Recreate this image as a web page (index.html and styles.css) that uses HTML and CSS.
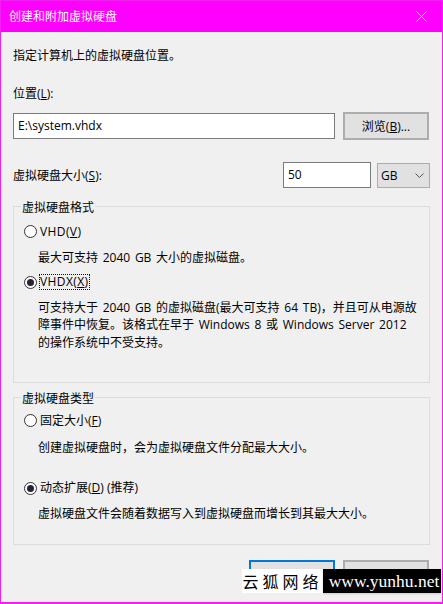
FILE: index.html
```html
<!DOCTYPE html>
<html lang="zh-CN">
<head>
<meta charset="utf-8">
<title>创建和附加虚拟硬盘</title>
<link rel="stylesheet" href="styles.css">
</head>
<body>
<div class="window">
  <header class="titlebar">
    <span class="title">创建和附加虚拟硬盘</span>
    <svg class="close" width="11" height="11" viewBox="0 0 11 11"><path d="M0.5 0.5L10.5 10.5M10.5 0.5L0.5 10.5" stroke="#fff" stroke-width="1" fill="none"/></svg>
  </header>
  <main class="content">
    <p class="intro">指定计算机上的虚拟硬盘位置。</p>
    <p class="loc-label">位置(<u>L</u>):</p>
    <div class="loc-row">
      <div class="field loc-field">E:\system.vhdx</div>
      <div class="btn">浏览(<u>B</u>)...</div>
    </div>
    <div class="size-row">
      <span class="size-label">虚拟硬盘大小(<u>S</u>):</span>
      <div class="field size-field">50</div>
      <div class="combo"><span>GB</span>
        <svg width="9" height="5" viewBox="0 0 9 5"><path d="M0.5 0.5L4.5 4.5L8.5 0.5" stroke="#555" fill="none"/></svg>
      </div>
    </div>
    <section class="group group-format">
      <div class="legend">虚拟硬盘格式</div>
      <div class="radio-row first"><span class="radio"></span><span class="radio-text latin">VHD(<u>V</u>)</span></div>
      <p class="desc">最大可支持 2040 GB 大小的虚拟磁盘。</p>
      <div class="radio-row second"><span class="radio on"></span><span class="radio-text latin focus">VHDX(<u>X</u>)</span></div>
      <p class="desc multi">可支持大于 2040 GB 的虚拟磁盘(最大可支持 64 TB)，并且可从电源故<br>障事件中恢复。该格式在早于 Windows 8 或 Windows Server 2012<br>的操作系统中不受支持。</p>
    </section>
    <section class="group group-type">
      <div class="legend">虚拟硬盘类型</div>
      <div class="radio-row first"><span class="radio"></span><span class="radio-text">固定大小(<u>F</u>)</span></div>
      <p class="desc">创建虚拟硬盘时，会为虚拟硬盘文件分配最大大小。</p>
      <div class="radio-row third"><span class="radio on"></span><span class="radio-text">动态扩展(<u>D</u>) (推荐)</span></div>
      <p class="desc multi">虚拟硬盘文件会随着数据写入到虚拟硬盘而增长到其最大大小。</p>
    </section>
    <div class="actions">
      <div class="btn primary"></div>
      <div class="btn"></div>
    </div>
  </main>
  <div class="watermark"><span class="wm-cn">云狐网络</span><span class="wm-en">www.yunhu.net</span></div>
</div>
</body>
</html>
```
FILE: styles.css
```css
html, body { margin: 0; padding: 0; }
body {
  width: 443px;
  height: 604px;
  overflow: hidden;
  background: #fff;
  font-family: "Open Sans", "Noto Sans CJK SC", sans-serif;
  font-size: 12px;
  line-height: 17px;
  color: #000;
}
p { margin: 0; }
u { text-underline-offset: 1px; }
.window {
  position: relative;
  box-sizing: border-box;
  width: 443px;
  height: 604px;
  border: 1px solid #f020f0;
  border-bottom-width: 2px;
  background: #f0f0f0;
  display: flex;
  flex-direction: column;
}
.titlebar {
  height: 30px;
  flex: none;
  background: #ff00ff;
  color: #fff;
  display: flex;
  align-items: center;
  justify-content: space-between;
  padding: 0 15px 1px 8px;
}
.title { font-size: 12px; }
.content { padding: 0 12px; display: flex; flex-direction: column; }
.intro { margin-top: 15px; }
.loc-label { margin-top: 21px; }
.loc-row { display: flex; align-items: center; gap: 8px; margin-top: 10px; }
.field {
  box-sizing: border-box;
  height: 26px;
  border: 1px solid #7a7a7a;
  background: #fff;
  padding: 3px 3px 3px 4px;
}
.loc-field { width: 322px; }
.btn {
  box-sizing: border-box;
  width: 86px;
  height: 28px;
  border: 2px solid #adadad;
  background: #e1e1e1;
  display: flex;
  align-items: center;
  justify-content: center;
}
.btn.primary { border-color: #0078d7; }
.size-row { display: flex; align-items: center; margin-top: 22px; }
.size-label { flex: 1; }
.size-field { width: 88px; }
.combo {
  box-sizing: border-box;
  width: 53px;
  height: 25px;
  margin-left: 6px;
  border: 1px solid #adadad;
  background: #e1e1e1;
  display: flex;
  align-items: center;
  justify-content: space-between;
  padding: 0 5px 0 3px;
}
.group {
  position: relative;
  box-sizing: border-box;
  width: 417px;
  border: 1px solid #dcdcdc;
}
.group-format { height: 177px; margin-top: 18px; }
.group-type { height: 148px; margin-top: 14px; }
.legend {
  position: absolute;
  left: 7px;
  top: -7px;
  padding: 0 1px;
  line-height: 15px;
  background: #f0f0f0;
}
.radio-row { display: flex; align-items: center; min-height: 19px; margin-left: 10px; }
.radio-row.first { margin-top: 15px; }
.group-type .radio-row.first { margin-top: 13px; }
.radio-row.second { margin-top: 6px; }
.radio-row.third { margin-top: 22px; }
.radio {
  box-sizing: border-box;
  width: 13px;
  height: 13px;
  border: 1px solid #333;
  border-radius: 50%;
  background: #fff;
  display: flex;
  align-items: center;
  justify-content: center;
  flex: none;
}
.radio.on::after {
  content: "";
  width: 7px;
  height: 7px;
  border-radius: 50%;
  background: #2b1f33;
}
.radio-text { margin-left: 2px; padding: 0 1px 0 0; line-height: 14px; border: 1px dotted transparent; }
.radio-text.latin { letter-spacing: 0.4px; }
.radio-text.focus { border-color: #111; }
.desc { margin: 8px 12px 0 24px; line-height: 17.5px; white-space: nowrap; word-spacing: 1.6px; }
.group-type .desc { margin-top: 9px; }
.desc.multi, .group-type .desc.multi { margin-top: 7px; }
.actions { display: flex; justify-content: flex-end; gap: 8px; margin: 15px 1px 0 0; }
.watermark {
  position: absolute;
  left: 241px;
  top: 568px;
  height: 24px;
  display: flex;
}
.wm-cn {
  width: 81px;
  background: #fff;
  color: #000;
  font-family: "Noto Sans CJK SC", sans-serif;
  font-size: 16px;
  line-height: 24px;
  letter-spacing: 4px;
  text-align: center;
}
.wm-en {
  width: 118px;
  padding-left: 4px;
  box-sizing: border-box;
  background: #000;
  color: #fff;
  box-shadow: 0 1px 2px rgba(0, 0, 0, 0.15);
  font-family: "Liberation Serif", serif;
  font-size: 17.5px;
  line-height: 24px;
  text-align: center;
}
```
